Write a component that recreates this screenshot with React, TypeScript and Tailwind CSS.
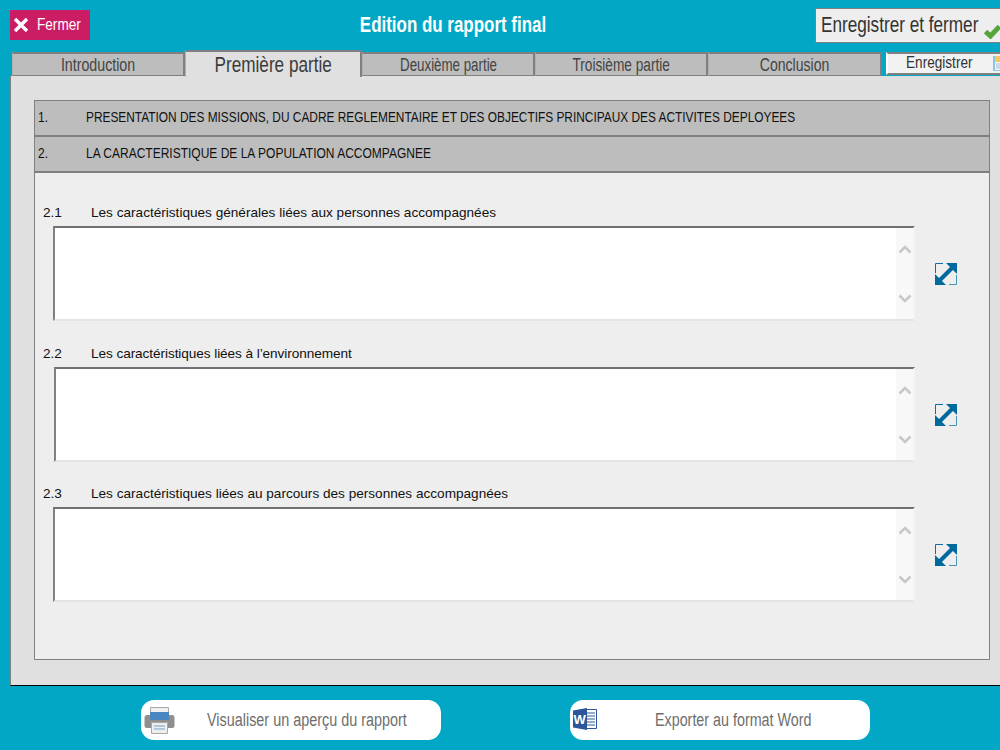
const sans = "font-['Liberation_Sans',sans-serif]";

function Tab({ label, active, w, sx }: { label: string; active?: boolean; w: string; sx: string }) {
  return (
    <div
      className={
        active
          ? `${w} ${sans} shrink-0 h-[27px] -mb-px z-10 flex items-center justify-center bg-[#e0e0e0] border-t-2 border-r-2 border-l border-[#808080] border-l-[#b0b0b0] text-[22px] text-[#3c3c3c] whitespace-nowrap`
          : `${w} ${sans} shrink-0 h-[24px] pt-[2px] pl-[1px] flex items-center justify-center bg-[#bdbdbd] border-t-2 border-r-2 border-l border-b border-[#808080] border-l-[#b0b0b0] text-[18px] text-[#444444] whitespace-nowrap`
      }
    >
      <span className={`inline-block ${sx}`}>{label}</span>
    </div>
  );
}

function Chevron({ down }: { down?: boolean }) {
  return (
    <svg width="14" height="9" viewBox="0 0 14 9" className={down ? "rotate-180" : ""}>
      <path d="M1.5 7.5 L7 2 L12.5 7.5" fill="none" stroke="#c8c8c8" strokeWidth="2.6" />
    </svg>
  );
}

function ExpandIcon() {
  return (
    <svg width="22" height="22" viewBox="0 0 22 22">
      <path d="M0.5 10V0.5H8" fill="none" stroke="#0a6fa0" strokeWidth="1" />
      <path d="M21.5 12V21.5H14" fill="none" stroke="#4a94b4" strokeWidth="1" />
      <path d="M11 0H22V11Z" fill="#006a9e" />
      <path d="M0 11V22H11Z" fill="#006a9e" />
      <path d="M5 17L17 5" stroke="#006a9e" strokeWidth="4" />
    </svg>
  );
}

function Field({
  num,
  label,
  box,
  mt,
  track,
}: {
  num: string;
  label: string;
  box: string;
  mt: string;
  track?: string;
}) {
  return (
    <div className={`${mt} flex flex-col`}>
      <div className={`h-[14px] pl-[8px] flex items-center text-[13.6px] text-[#111111] ${sans}`}>
        <span className="w-[48px]">{num}</span>
        <span className={track}>{label}</span>
      </div>
      <div className="flex items-center mt-[6px]">
        <div
          className={`${box} h-[95px] flex justify-end bg-white border-2 border-t-[#707070] border-l-[#808080] border-r-[#f4f4f4] border-b-[#e4e4e4]`}
        >
          <div className="w-[17px] h-full bg-[#f8f8f8] flex flex-col items-center justify-between pt-[17px] pb-[16px]">
            <Chevron />
            <Chevron down />
          </div>
        </div>
        <div className="ml-[20px] flex h-[22px] items-center">
          <ExpandIcon />
        </div>
      </div>
    </div>
  );
}

export default function App() {
  return (
    <div className="w-[1000px] h-[750px] overflow-hidden bg-[#02a7c6] flex flex-col">
      <header className="relative h-[50px] shrink-0 flex justify-between pl-[10px]">
        <button className={`${sans} mt-[10px] w-[80px] h-[30px] bg-[#cb1d63] flex items-center text-[17px] text-white whitespace-nowrap`}>
          <svg width="16" height="16" viewBox="0 0 16 16" className="ml-[3px] mr-[8px] shrink-0">
            <path d="M2 2L14 14M14 2L2 14" stroke="white" strokeWidth="3.4" />
          </svg>
          <span className="inline-block w-[43px] origin-left scale-x-[0.8] text-left">Fermer</span>
        </button>
        <h1 className={`${sans} absolute left-[260px] w-[386px] top-[10px] text-center text-[22px] leading-[30px] font-bold text-white`}>
          <span className="inline-block scale-x-[0.77]">Edition du rapport final</span>
        </h1>
        <button className={`${sans} mt-[8px] w-[185px] h-[35px] bg-[#eeeeee] border border-[#808080] border-r-0 flex items-center pl-[5px] text-[22px] text-[#333333] whitespace-nowrap`}>
          <span className="inline-block w-[157px] origin-left scale-x-[0.78] text-left -mt-[2px]">Enregistrer et fermer</span>
          <svg width="17" height="14" viewBox="0 0 17 14" className="ml-[6px] mt-[12px] shrink-0">
            <path d="M1.5 6.5L6.5 11L15.5 1.5" fill="none" stroke="#56a53c" strokeWidth="5" />
          </svg>
        </button>
      </header>

      <nav className="h-[26px] shrink-0 pl-[12px] flex items-end">
        <Tab label="Introduction" w="w-[173px]" sx="scale-x-[0.79]" />
        <Tab label="Première partie" active w="w-[177px]" sx="scale-x-[0.78]" />
        <Tab label="Deuxième partie" w="w-[173px]" sx="scale-x-[0.74]" />
        <Tab label="Troisième partie" w="w-[173px]" sx="scale-x-[0.76]" />
        <Tab label="Conclusion" w="w-[174px]" sx="scale-x-[0.78]" />
        <div className={`${sans} ml-[4px] mb-[1px] w-[120px] h-[23px] shrink-0 bg-[#f2f2f2] border-t-2 border-l-2 border-b-2 border-[#808080] border-l-white flex items-center text-[17px] text-[#333333] whitespace-nowrap`}>
          <span className="ml-[18px] w-[67px] inline-block origin-left scale-x-[0.8] text-left -mt-[2px]">Enregistrer</span>
          <svg width="16" height="15" viewBox="0 0 16 15" className="ml-[20px] shrink-0">
            <path d="M0 0H16V15H0Z" fill="#8cc4ea" />
            <path d="M2 0H14V6H2Z" fill="#f2c869" />
            <path d="M2 6H16V14H2Z" fill="#f4f4f4" />
            <path d="M3 8H14M3 10H14M3 12H14" stroke="#9cc0e0" />
          </svg>
        </div>
      </nav>

      <main className="ml-[10px] w-[1000px] h-[610px] shrink-0 bg-[#e0e0e0] border-l border-b border-l-[#808080] border-b-black pl-[23px] pt-[24px]">
        <section className="w-[956px] h-[560px] bg-[#eeeeee] border border-[#808080]">
          <div className={`${sans} h-[36px] pb-[2px] bg-[#bdbdbd] flex items-center pl-[3px] text-[15px] text-[#111111] border-b-2 border-[#808080] whitespace-nowrap`}>
            <span className="w-[48px] inline-block origin-left scale-x-[0.8]">1.</span>
            <span className="inline-block origin-left scale-x-[0.792]">PRESENTATION DES MISSIONS, DU CADRE REGLEMENTAIRE ET DES OBJECTIFS PRINCIPAUX DES ACTIVITES DEPLOYEES</span>
          </div>
          <div className={`${sans} h-[36px] pb-[2px] bg-[#bdbdbd] flex items-center pl-[3px] text-[15px] text-[#111111] border-b-2 border-[#808080] whitespace-nowrap`}>
            <span className="w-[48px] inline-block origin-left scale-x-[0.8]">2.</span>
            <span className="inline-block origin-left scale-x-[0.8]">LA CARACTERISTIQUE DE LA POPULATION ACCOMPAGNEE</span>
          </div>
          <div>
            <Field mt="mt-[33px]" num="2.1" label="Les caractéristiques générales liées aux personnes accompagnées" box="ml-[18px] w-[862px]" />
            <Field mt="mt-[26px]" num="2.2" label="Les caractéristiques liées à l’environnement" box="ml-[19px] w-[861px]" track="tracking-[-0.07px]" />
            <Field mt="mt-[25px]" num="2.3" label="Les caractéristiques liées au parcours des personnes accompagnées" box="ml-[18px] w-[862px]" />
          </div>
        </section>
      </main>

      <footer className="flex-1 pl-[141px] pt-[14px] flex items-start">
        <button className={`${sans} w-[300px] h-[40px] bg-white rounded-[13px] flex items-center text-[18px] text-[#6e6e6e] whitespace-nowrap`}>
          <svg width="31" height="27" viewBox="0 0 31 27" className="ml-[3px] shrink-0">
            <path d="M6.5 0.5H24.5V8H6.5Z" fill="#f0f0f0" stroke="#a8a8a8" />
            <path d="M3 8H28Q30.5 8 30.5 10.5V18.5Q30.5 21 28 21H3Q0.5 21 0.5 18.5V10.5Q0.5 8 3 8Z" fill="#8f8f8f" />
            <path d="M6 5H25V13H6Z" fill="#4a86c0" />
            <path d="M7.5 15.5H23.5V26.5H7.5Z" fill="#eeeeee" stroke="#a8a8a8" />
            <path d="M10 19H21M10 22H21" stroke="#6ea0d0" />
          </svg>
          <span className="ml-[32px] w-[200px] inline-block origin-left scale-x-[0.8] text-left">Visualiser un aperçu du rapport</span>
        </button>
        <button className={`${sans} ml-[129px] w-[300px] h-[40px] bg-white rounded-[13px] flex items-center text-[18px] text-[#6e6e6e] whitespace-nowrap`}>
          <svg width="24" height="22" viewBox="0 0 24 22" className="ml-[3px] -mt-[2px] shrink-0">
            <path d="M8 1.5H23.5V20.5H8Z" fill="#ffffff" stroke="#2b579a" />
            <path d="M14 5H22M14 8H22M14 11H22M14 14H22M14 17H22" stroke="#2b579a" />
            <path d="M0 2.5L14 0V22L0 19.5Z" fill="#2b579a" />
            <text x="0.5" y="16" fill="white" fontSize="13" fontWeight="bold" fontFamily="Liberation Sans, sans-serif">W</text>
          </svg>
          <span className="ml-[58px] w-[156px] inline-block origin-left scale-x-[0.795] text-left">Exporter au format Word</span>
        </button>
      </footer>
    </div>
  );
}
